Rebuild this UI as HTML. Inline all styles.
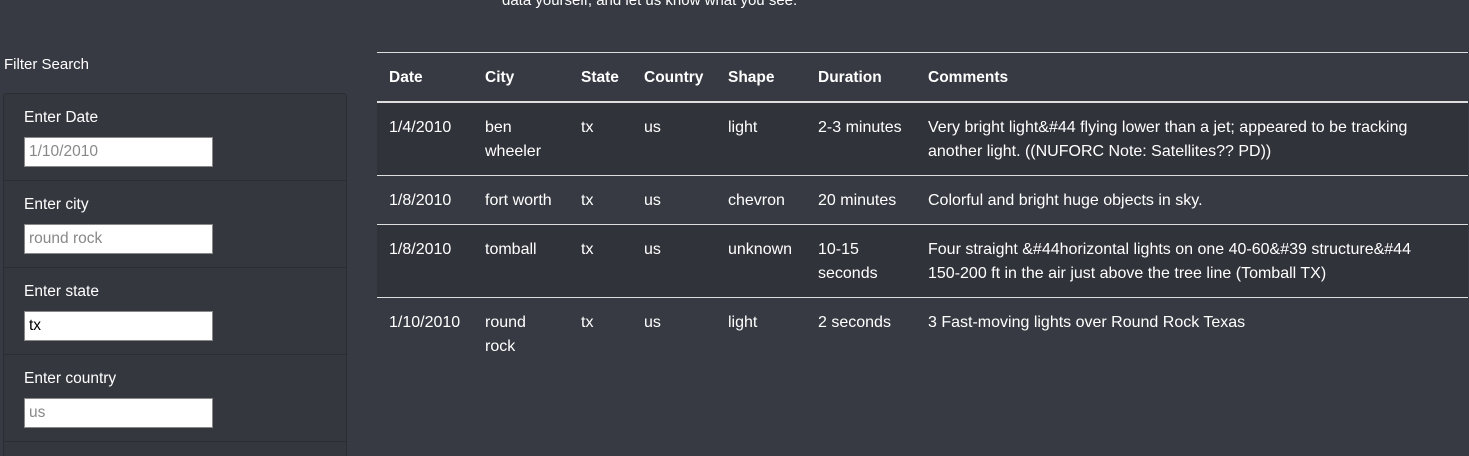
<!DOCTYPE html>
<html style="overflow:hidden;height:456px"><head><style>
body{margin:0;background:#373a42;color:#fff;font-family:"Liberation Sans",sans-serif;font-size:16px;width:1469px;height:456px;overflow:hidden;position:relative}
.top{position:absolute;left:502px;top:-9px;line-height:20px;font-size:15px}
.fs{position:absolute;left:4px;top:56px;font-size:15px}
.panel{position:absolute;left:3px;top:93px;width:342px;height:380px;border:1px solid #2b2d33;border-radius:3px;background:#34373e}
.item{height:86px;border-bottom:1px solid #2b2d33;position:relative}
.item .l{position:absolute;left:20px;top:15px;font-size:15.5px}
.item .i{position:absolute;left:20px;top:43px;background:#fff;border:1px solid #888;color:#888;font-size:15.5px;line-height:28px;padding-left:4px;box-sizing:border-box;width:189px;height:30px}
table{position:absolute;left:377px;top:52px;width:1091px;border-collapse:collapse;border-top:1px solid #ddd}
th{text-align:left;font-weight:bold;height:47px;padding:1px 12px 0;border-bottom:2px solid #ddd;font-size:15.5px}
td{vertical-align:top;padding:13px 12px 11px;line-height:24px;border-bottom:1px solid #ddd}
tr.s td{background:#31333a}
tr:last-child td{border-bottom:none}
</style></head><body>
<div class="top">data yourself, and let us know what you see.</div>
<div class="fs">Filter Search</div>
<div class="panel">
<div class="item"><div class="l">Enter Date</div><div class="i">1/10/2010</div></div>
<div class="item"><div class="l">Enter city</div><div class="i">round rock</div></div>
<div class="item"><div class="l">Enter state</div><div class="i" style="color:#000">tx</div></div>
<div class="item"><div class="l">Enter country</div><div class="i">us</div></div>
</div>
<table>
<colgroup><col style="width:96px"><col style="width:96px"><col style="width:63px"><col style="width:84px"><col style="width:90px"><col style="width:110px"><col></colgroup>
<tr><th>Date</th><th>City</th><th>State</th><th>Country</th><th>Shape</th><th>Duration</th><th>Comments</th></tr>
<tr class="s"><td>1/4/2010</td><td>ben wheeler</td><td>tx</td><td>us</td><td>light</td><td>2-3 minutes</td><td>Very bright light&amp;#44 flying lower than a jet; appeared to be tracking another light. ((NUFORC Note: Satellites?? PD))</td></tr>
<tr><td>1/8/2010</td><td>fort worth</td><td>tx</td><td>us</td><td>chevron</td><td>20 minutes</td><td>Colorful and bright huge objects in sky.</td></tr>
<tr class="s"><td>1/8/2010</td><td>tomball</td><td>tx</td><td>us</td><td>unknown</td><td>10-15 seconds</td><td>Four straight &amp;#44horizontal lights on one 40-60&amp;#39 structure&amp;#44<br>150-200 ft in the air just above the tree line (Tomball TX)</td></tr>
<tr><td>1/10/2010</td><td>round rock</td><td>tx</td><td>us</td><td>light</td><td>2 seconds</td><td>3 Fast-moving lights over Round Rock Texas</td></tr>
</table>
</body></html>
